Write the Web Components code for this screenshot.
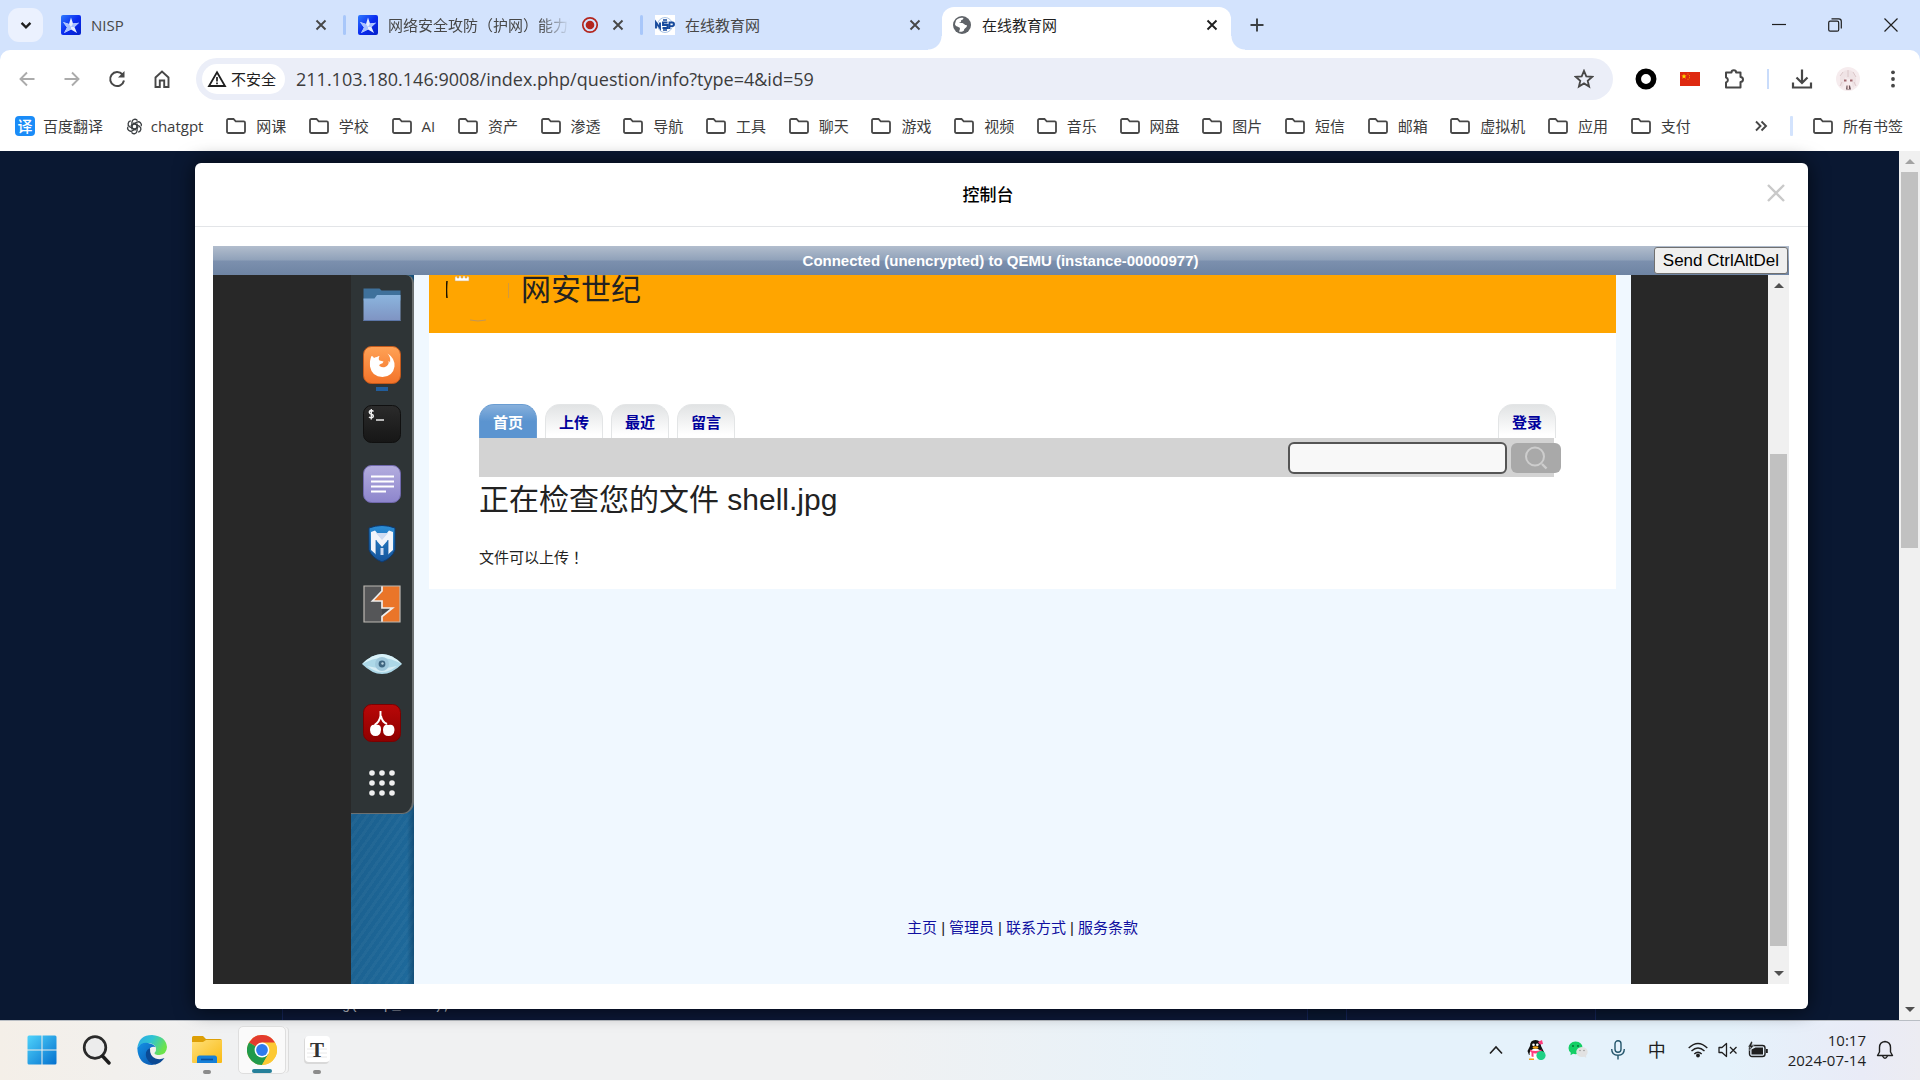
<!DOCTYPE html>
<html lang="zh-CN">
<head>
<meta charset="utf-8">
<title>在线教育网</title>
<style>
  html, body { margin: 0; height: 100%; overflow: hidden; }
  body {
    font: 15px/20px "Open Sans", "Noto Sans CJK SC", sans-serif;
    color: #1f1f1f;
  }
</style>
</head>
<body>
<desktop-screen></desktop-screen>

<script>
const ICONS = {
  chevronDown: ['0 0 12 12', '<path d="M2.2 4.2L6 8l3.800-3.800" fill="none" stroke="#1f1f1f" stroke-width="2"/>'],
  nisp: ['0 0 20 20', '<defs><linearGradient id="g" x1="0" x2="1" y2="1"><stop offset="0" stop-color="#2f7bff"/><stop offset=".5" stop-color="#0a2cf0"/><stop offset="1" stop-color="#0420c8"/></linearGradient></defs><rect width="20" height="20" rx="2" fill="url(#g)"/><path d="M10 2.500L12 8.500l6-.8-4.500 4.300 2.500 6-6-3.500L3 18l3-5.500L2 7l6 2z" fill="#e6eeff"/><path d="M2 7l6 2 2 3-4 .5zM12 8.500l6-.8-4.500 4.300-3.500 0zM3 18l7-3.500V12l-4 .5z" fill="#a9c2ff"/>'],
  nsp: ['0 0 20 20', '<rect width="20" height="20" fill="#fff"/><circle cx="10" cy="10" r="7.500" fill="none" stroke="#a9c4e6"/><path d="M1 13.500V7.500l4 5.500V7.500M12.500 7.500h-4.500v2.500h4.500v3h-5M14.500 14V7.500h3q1.500 0 1.500 1.800t-1.500 1.800h-3" fill="none" stroke="#174a9c" stroke-width="1.900"/><path d="M8 5h4M8 15h4" stroke="#174a9c" stroke-width="1.300"/>'],
  globe: ['0 0 20 20', '<circle cx="10" cy="10" r="9" fill="#5f6368"/><path d="M4 5.500c2-2.500 5-3.300 7.500-2.500-.3 1.500-1.500 2-2.500 2.500.5 1.500-1 2-2 2.500h5c.5 2 2 1.500 3 2.500 0 2.500-3 2.300-3 5-1.500 1.500-3.500 1.500-5 1 .7-2 1.500-2.500.5-4C5.500 11.500 3 11 3 9z" fill="#fff"/><path d="M10.500 8l2-2.500 2 .5 1.500 3-2.500 1z" fill="#5f6368"/>'],
  record: ['0 0 20 20', '<circle cx="10" cy="10" r="7.200" fill="none" stroke="#b3261e" stroke-width="1.700"/><circle cx="10" cy="10" r="4.300" fill="#b3261e"/>'],
  close: ['0 0 12 12', '<path d="M1.500 1.500l9 9M10.500 1.500l-9 9" stroke="currentColor" stroke-width="1.900"/>'],
  thinClose: ['0 0 14 14', '<path d="M.5.5l13 13M13.500.5l-13 13" stroke="currentColor" stroke-width="1.200"/>'],
  dialogClose: ['0 0 18 18', '<path d="M1 1l16 16M17 1L1 17" stroke="currentColor" stroke-width="2.400"/>'],
  plus: ['0 0 14 14', '<path d="M7 .5v13M.5 7h13" stroke="#3c4043" stroke-width="1.900"/>'],
  minimize: ['0 0 14 14', '<path d="M0 6.500h14" stroke="#1f1f1f" stroke-width="1.200"/>'],
  restore: ['0 0 14 14', '<rect x=".7" y="3.200" width="10" height="10" rx="1.500" fill="none" stroke="#1f1f1f" stroke-width="1.200"/><path d="M3.500.9h7.300q2.500 0 2.500 2.500v7" fill="none" stroke="#1f1f1f" stroke-width="1.200"/>'],
  back: ['0 0 20 20', '<path d="M17.500 10H3.500M10 3.500L3.500 10l6.500 6.500" fill="none" stroke="#ababab" stroke-width="1.900"/>'],
  forward: ['0 0 20 20', '<path d="M2.500 10h14M10 3.500l6.500 6.500-6.500 6.500" fill="none" stroke="#ababab" stroke-width="1.900"/>'],
  reload: ['0 0 20 20', '<path d="M15.500 5.500A7 7 0 1 0 17 11.500" fill="none" stroke="#474747" stroke-width="2"/><path d="M17.500 2v6.500H11z" fill="#474747"/>'],
  home: ['0 0 20 20', '<path d="M3.500 18V8.500L10 2.500l6.500 6v9.500h-4.300v-6.500H7.800V18z" fill="none" stroke="#474747" stroke-width="1.900"/>'],
  warn: ['0 0 20 20', '<path d="M10 3.200L18 17H2z" fill="none" stroke="#1f1f1f" stroke-width="1.800"/><path d="M10 8v4.500M10 13.500v1.800" stroke="#1f1f1f" stroke-width="1.700"/>'],
  star: ['0 0 20 20', '<path d="M10 1.800l2.300 5.500 5.900.5-4.500 3.900 1.400 5.800L10 14.400l-5.100 3.100 1.400-5.800L1.800 7.800l5.900-.5z" fill="none" stroke="#474747" stroke-width="1.800"/>'],
  ring: ['0 0 20 20', '<circle cx="10" cy="10" r="7" fill="none" stroke="#000" stroke-width="5"/>'],
  flag: ['0 0 20 14', '<rect width="20" height="14" fill="#de2910"/><path d="M4 1.800l.7 1.800h1.900l-1.500 1.200.6 1.900L4 5.600 2.300 6.700l.6-1.900-1.500-1.200h1.900z" fill="#ffde00"/><path d="M7.500 1.500h1v1h-1zM9 3.200h1v1H9zM9 5.200h1v1H9zM7.500 6.700h1v1h-1z" fill="#f5a700"/>'],
  puzzle: ['0 0 22 22', '<path d="M3 4.500h5.500a2.300 2.300 0 0 1 4.600 0H17.500V9a2.500 2.500 0 0 1 0 5v5.500H3v-5a2.600 2.600 0 0 0 0-5z" fill="none" stroke="#474747" stroke-width="2" stroke-linejoin="round"/>'],
  download: ['0 0 22 22', '<path d="M11 1.500v13M5.500 9.500L11 15l5.500-5.500M2 14.500v5h18v-5" fill="none" stroke="#474747" stroke-width="2.200"/>'],
  avatar: ['0 0 24 24', '<circle cx="12" cy="12" r="12" fill="#f6ecee"/><path d="M4 12c0-6 4-9 8-9s8 3 8 9c0 4-1 7-3 9-1-3-1-7-2-9-3 0-5-1-6-2 0 4-1 8-3 11-2-2-2-5-2-9z" fill="#efe3e5"/><path d="M7 5l-3 4M12 3v7M17 5l3 5M6 15l-2 4M18 15l2 4" stroke="#d5bfc2" stroke-width=".8"/><path d="M8 12.500h2.500v2H8zM14 12.500h2.500v2H14z" fill="#a36a70"/><path d="M10.500 18.500h3.500l1 4h-5z" fill="#6d565b"/><path d="M11.500 18h1.500v4h-1.500z" fill="#f3d9d8"/>'],
  dots: ['0 0 20 20', '<g fill="#474747"><circle cx="10" cy="3.300" r="1.900"/><circle cx="10" cy="10" r="1.900"/><circle cx="10" cy="16.700" r="1.900"/></g>'],
  gpt: ['0 0 20 20', '<g fill="none" stroke="#3c4043" stroke-width="1.600"><path id="a" d="M7 8.300V5a3.600 3.600 0 0 1 6.500-2M7 8.300v3.400l4.500 2.500"/><use href="#a" transform="rotate(60 10 10)"/><use href="#a" transform="rotate(120 10 10)"/><use href="#a" transform="rotate(180 10 10)"/><use href="#a" transform="rotate(240 10 10)"/><use href="#a" transform="rotate(300 10 10)"/></g>'],
  folderLine: ['0 0 20 16', '<path d="M1 2.500Q1 1 2.500 1H7.500l2.200 2.300h8Q19 3.300 19 4.800v8.700q0 1.500-1.500 1.500h-15Q1 15 1 13.500z" fill="none" stroke="#474747" stroke-width="1.800"/>'],
  more: ['0 0 14 12', '<path d="M2 1.500L6.500 6 2 10.500M7.500 1.500L12 6l-4.500 4.500" fill="none" stroke="#474747" stroke-width="1.900"/>'],
  dockFiles: ['0 0 38 38', '<path d="M.5 2.500h16l2 2h19v10H.5z" fill="#3f719b"/><path d="M.5 12.500h11l2.500-3.500h23.500v26H.5z" fill="url(#f)"/><defs><linearGradient id="f" y2="1" x2="0"><stop stop-color="#8bb5de"/><stop offset="1" stop-color="#7f93c2"/></linearGradient></defs><path d="M.5 34.500h37" stroke="#5c76a8"/>'],
  dockFox: ['0 0 38 38', '<defs><linearGradient id="f" y2="1" x2="0"><stop stop-color="#ffa256"/><stop offset="1" stop-color="#f37329"/></linearGradient></defs><rect x=".5" y=".5" width="37" height="37" rx="8" fill="url(#f)" stroke="#c3591c"/><path d="M8.500 10q1.500 0 2.500 2 1.500-1 3-1 1-1 2.500-1-1.500 3 0 4.500l4 1q-.5 2-3 2.500-2 1-1 2 3 2 5.500 1 4.500-2 3.500-6 1.500.5 1.500 2Q28 11 24.500 7.500q7.500 4.500 7 13-1.500 10-12 10.500Q9 31 7 20.500 6.500 14 8.500 10z" fill="#fff"/>'],
  dockTerm: ['0 0 38 38', '<defs><linearGradient id="f" y2="1" x2="0"><stop stop-color="#2b2b2b"/><stop offset="1" stop-color="#161616"/></linearGradient></defs><rect x=".5" y=".5" width="37" height="37" rx="8" fill="url(#f)" stroke="#101010"/><path d="M10.500 6.500Q9.500 5.500 8.200 5.500 6.200 5.700 6.300 7.500 6.500 9 8.300 9.200q2 .3 2.100 1.900-.2 1.700-2.200 1.800Q7 12.900 6 12M8.300 4v10.500" fill="none" stroke="#eee" stroke-width="1.400"/><path d="M13 15h8" stroke="#ddd" stroke-width="1.600"/>'],
  dockText: ['0 0 38 38', '<defs><linearGradient id="f" y2="1" x2="0"><stop stop-color="#b3addf"/><stop offset="1" stop-color="#8d85cc"/></linearGradient></defs><rect x=".5" y=".5" width="37" height="37" rx="8" fill="url(#f)" stroke="#7068ad"/><path d="M8 11.500h23M8 16.500h23M8 21.500h23M8 26.500h15" stroke="#fff" stroke-width="2.200"/>'],
  dockMeta: ['0 0 38 38', '<defs><linearGradient id="f" y2="1" x2="0"><stop stop-color="#2c8ed6"/><stop offset="1" stop-color="#155299"/></linearGradient></defs><path d="M6 3q13-5 26 0v22q-3 8-13 12Q9 33 6 25z" fill="url(#f)" stroke="#0d3a70"/><path d="M8 25V7l4-1.500L19 14l7-8.500 4 1.500v18l-5 4.500V15l-6 7-6-7v14.500z" fill="#f2f5fb"/><path d="M13 8l6 7 6-7M17.500 23h3v7h-3z" fill="#cfdcf2"/><path d="M13 15v14M25 15v14" stroke="#1b5fa8" stroke-width=".8"/>'],
  dockBurp: ['0 0 38 38', '<path d="M1 1h18v36H1z" fill="#555658"/><path d="M19 1h18v36H19z" fill="#ea7529"/><path d="M19 1v6L10 16h9V1z" fill="#ea7529"/><path d="M19 16v7h10.500L19 31.500z" fill="#46484b"/><path d="M19 1v5l-9.500 10H19v7h10.500L19 31.500V37" fill="none" stroke="#f1eeec" stroke-width="1.700"/><path d="M1 1h36v36H1z" fill="none" stroke="#bcb8b2" stroke-width="1.200"/>'],
  dockEye: ['0 0 42 24', '<path d="M1 12Q11 2 21 2t20 10Q31 22 21 22T1 12z" fill="#add8e8"/><path d="M1 12Q11 2 21 2t20 10Q30 6 21 6T1 12z" fill="#d9f2f9"/><path d="M6 14q8 6 15 6t15-6q-8 2-15 2T6 14z" fill="#d6edf5"/><circle cx="21" cy="12" r="7" fill="#9fc8dc"/><circle cx="21" cy="12" r="3.400" fill="#3f6680"/><circle cx="21.500" cy="11.500" r="1.200" fill="#b9d3e0"/>'],
  dockCherry: ['0 0 38 38', '<defs><linearGradient id="f" y2="1" x2="0"><stop stop-color="#b90808"/><stop offset="1" stop-color="#8e0000"/></linearGradient></defs><rect x=".5" y=".5" width="37" height="37" rx="8" fill="url(#f)" stroke="#7a0000"/><path d="M17.500 7v5q-1 6-6 9M18 12q1 6 6 8" fill="none" stroke="#fff" stroke-width="1.900"/><path d="M7 26q0-6 5.500-5 6-1 5.500 5-.5 6-5.500 6T7 26zM20 26q0-6 5.500-5 6-1 6 5-.5 6-6 6T20 26z" fill="#fff"/>'],
  dockGrid: ['0 0 38 38', '<g fill="#efefef"><circle cx="9" cy="9" r="2.800"/><circle cx="19" cy="9" r="2.800"/><circle cx="29" cy="9" r="2.800"/><circle cx="9" cy="19" r="2.800"/><circle cx="19" cy="19" r="2.800"/><circle cx="29" cy="19" r="2.800"/><circle cx="9" cy="29" r="2.800"/><circle cx="19" cy="29" r="2.800"/><circle cx="29" cy="29" r="2.800"/></g>'],
  siteMark: ['0 0 66 50', '<path d="M1 6q-1 9 0 17" stroke="#1a1200" stroke-width="1.500" fill="none"/><path d="M62.500 8v15" stroke="#d49a3c"/><path d="M24 45q8 2 16 0" stroke="#c0965a" fill="none"/><path d="M9 6V2l2-1v2h2V1h2v2h2V1h2v2h2V1l2 1v4z" fill="#fff" stroke="#d8a860" stroke-width=".6"/>'],
  lens: ['0 0 26 26', '<circle cx="12" cy="11.500" r="9" fill="none" stroke="#cdcdcd" stroke-width="2"/><path d="M19 19l4.500 4.500" stroke="#cdcdcd" stroke-width="2.400"/>'],
  windows: ['0 0 30 30', '<defs><linearGradient id="w" x2="1" y2="1"><stop stop-color="#4fd3fb"/><stop offset="1" stop-color="#0470ce"/></linearGradient></defs><path d="M.5 2q0-1.500 1.500-1.500h12.500v14H.5zM15.500.5H28q1.500 0 1.500 1.500v12.500h-14zM.5 15.500h14v14H2Q.5 29.500.5 28zM15.500 15.500h14V28q0 1.500-1.500 1.500H15.500z" fill="url(#w)"/>'],
  search: ['0 0 30 30', '<circle cx="13" cy="12.500" r="10.800" fill="#ececec" stroke="#2a2a2a" stroke-width="2.700"/><path d="M20.500 21l6.500 7" stroke="#1d1d1d" stroke-width="3.400" stroke-linecap="round"/>'],
  edge: ['0 0 30 30', '<defs><linearGradient id="e" x2="1" y2=".4"><stop stop-color="#2aa7e8"/><stop offset=".5" stop-color="#2fc4d2"/><stop offset="1" stop-color="#6be34c"/></linearGradient><linearGradient id="h" x2="1" y2="1"><stop stop-color="#1392e6"/><stop offset="1" stop-color="#0a50a8"/></linearGradient></defs><path d="M.3 13Q2 0 15 0q14 1 15 12-.5 7.500-7.500 8-5 0-5-2 2-2 1.500-5-1-4-7-5Q4 7.500.3 13z" fill="url(#e)"/><path d="M.3 13Q4 7 11 8q6 1 7.500 4-6-1-7.500 5 0 10 11 10Q19 30 15 30 1 29.500.3 13z" fill="url(#h)"/><path d="M13 13q-6 3-3.500 10 3 6 9 6.500Q24 28 27.500 23q-4 2-9 .5-6-2.500-5.500-10.500z" fill="#0b4a94"/>'],
  explorer: ['0 0 30 28', '<path d="M0 1.500Q0 0 1.500 0H11l3 3h14q2 0 2 2v5H0z" fill="#dd9f06"/><path d="M0 6h11l3-2h16v22q0 1-1 1H1q-1 0-1-1z" fill="url(#y)"/><defs><linearGradient id="y" x2="1" y2="1"><stop stop-color="#ffe07a"/><stop offset="1" stop-color="#f9ba13"/></linearGradient></defs><path d="M5 27v-5q0-2.500 2.500-2.500h15Q25 19.500 25 22v5z" fill="#1680d8"/><path d="M9 23.500h12" stroke="#0a4f9c" stroke-width="1.600"/>'],
  chrome: ['0 0 30 30', '<circle cx="15" cy="15" r="15" fill="#fcc934"/><path d="M15 15L2 7.500A15 15 0 0 1 28 7.500z" fill="#e33b2e"/><path d="M2 7.500A15 15 0 0 0 15 30L21.500 18.700 15 15z" fill="#219a4c"/><path d="M15 7.500h13A15 15 0 0 1 15 30l6.500-11.300z" fill="#fcc934"/><circle cx="15" cy="15" r="7.400" fill="#fff"/><circle cx="15" cy="15" r="5.900" fill="#2f7bee"/>'],
  typora: ['0 0 28 30', '<rect x="1" y="2" width="25" height="27" rx="4" fill="#d9d9d9"/><rect x="2" y="1" width="25" height="26" rx="4" fill="#fff"/><path d="M4 14h20M4 18h20M4 22h20" stroke="#e2e2e2" stroke-width=".8"/>'],
  chevronUp: ['0 0 16 16', '<path d="M2 11.500l6-6.500 6 6.500" fill="none" stroke="#1f1f1f" stroke-width="1.600"/>'],
  qq: ['0 0 20 20', '<path d="M1.500 11Q3 8 4 6q0-6 5.500-6T15 6l3 6-1 3H3z" fill="#111"/><ellipse cx="9.500" cy="14" rx="6" ry="5.500" fill="#fff"/><circle cx="7.500" cy="4.800" r="1.300" fill="#fff"/><circle cx="11.300" cy="4.800" r="1.300" fill="#fff"/><ellipse cx="9.500" cy="7.500" rx="3" ry="1.200" fill="#f5a214"/><path d="M4 9.500q5 3 11.500 0v2.500q-5 2.500-8 1v4l-2-.5v-4q-2-1-1.500-3zM12 2l4-2 1 4-3 .5z" fill="#ff3c7d"/><path d="M3 18.500h5V20H3z" fill="#f5a214"/><circle cx="15" cy="15.500" r="4.600" fill="#1fd085"/>'],
  wechat: ['0 0 20 18', '<path d="M7.500.5q7 .5 7 6.500-.5 6-7 6.300l-2.500-.5-2.500 1.500.3-2.500Q.5 10 .5 7q.500-6 7-6.500z" fill="#14cf66"/><circle cx="5" cy="5" r=".9" fill="#076b34"/><circle cx="10" cy="5" r=".9" fill="#076b34"/><path d="M14 6q5.500.5 5.700 5-.2 2.500-1.700 3.800l.2 2-2-1q-7.500 1-8-4.800Q8.500 6.500 14 6z" fill="#e2e2e2"/><circle cx="12" cy="9.500" r=".8" fill="#999"/><circle cx="16" cy="9.500" r=".8" fill="#999"/>'],
  mic: ['0 0 16 20', '<rect x="5" y=".8" width="6" height="11.500" rx="3" fill="none" stroke="#24566b" stroke-width="1.400"/><path d="M1.700 9q0 6.300 6.300 6.300T14.300 9M8 15.300v4.200" fill="none" stroke="#24566b" stroke-width="1.400"/>'],
  wifi: ['0 0 20 16', '<g fill="none" stroke="#1f1f1f" stroke-width="1.400"><path d="M.7 6Q10-3 19.300 6M3.500 9q6.500-6 13 0M6.300 12q3.700-3.500 7.400 0"/></g><circle cx="10" cy="13.500" r="1.900" fill="#1f1f1f"/>'],
  mute: ['0 0 20 16', '<path d="M1 5.500h3L8.500 1.500v13L4 10.500H1z" fill="none" stroke="#1f1f1f" stroke-width="1.300" stroke-linejoin="round"/><path d="M12 5l6.500 6.500M18.500 5L12 11.500" stroke="#1f1f1f" stroke-width="1.300"/>'],
  battery: ['0 0 20 18', '<rect x="1.500" y="4.500" width="15.500" height="11" rx="2.500" fill="none" stroke="#1f1f1f" stroke-width="1.400"/><path d="M3.500 8.500l4-2h7.500v7H3.500z" fill="#1f1f1f"/><path d="M18 8h1.800v4H18z" fill="#1f1f1f"/><path d="M3.500 0L0 6h2.500L1.500 9.500 6 4.500H3.500l1-3z" fill="#1f1f1f" stroke="#e5f2fb" stroke-width=".4"/>'],
  bell: ['0 0 18 20', '<path d="M9 1.500q5.500.5 5.500 6v4.500l2 3.500h-15l2-3.500V7.500q0-5.500 5.500-6zM6.500 16q2.500 4.500 5 0" fill="none" stroke="#1f1f1f" stroke-width="1.400" stroke-linejoin="round"/>'],
};

const RESET = `
  *, *::before, *::after { box-sizing: border-box; }
  button, input { font: inherit; color: inherit; margin: 0; padding: 0; border: 0; background: none; outline: 0; }
  button { display: flex; align-items: center; justify-content: center; flex: none; }
  a { color: inherit; text-decoration: none; }
`;

function define(name, css, html) {
  const template = document.createElement('template');
  template.innerHTML = `<style>${RESET}${css}</style>${html}`;
  customElements.define(name, class extends HTMLElement {
    constructor() {
      super();
      this.attachShadow({ mode: 'open' }).append(template.content.cloneNode(true));
    }
  });
}

/* ---------- icon ---------- */
customElements.define('ui-icon', class extends HTMLElement {
  constructor() {
    super();
    this.attachShadow({ mode: 'open' });
  }
  connectedCallback() {
    const [box, body] = ICONS[this.getAttribute('name')];
    const [w, h = w] = this.getAttribute('size').split(' ');
    this.shadowRoot.innerHTML = `
      <style>:host { display: block; flex: none; width: ${w}px; height: ${h}px; } svg { display: block; width: 100%; height: 100%; }</style>
      <svg viewBox="${box}" aria-hidden="true">${body}</svg>`;
  }
});

/* ---------- scroll bar ---------- */
define('scroll-rail', `
  :host { display: flex; flex-direction: column; flex: none; width: 21px; padding: 0 2px; background: #f0f0f0; }
  i { flex: none; height: 21px; display: flex; align-items: center; justify-content: center; }
  i::before { content: ""; border: 5px solid transparent; }
  .up::before { border-top: 0; border-bottom-color: var(--up, #505050); }
  .down::before { border-bottom: 0; border-top-color: #505050; }
  .before { flex: var(--before, 0); }
  .thumb { flex: var(--thumb, 1); background: #c1c1c1; }
  .after { flex: var(--after, 1); }
`, `<i class="up"></i><div class="before"></div><div class="thumb"></div><div class="after"></div><i class="down"></i>`);

/* ---------- browser tab ---------- */
define('browser-tab', `
  :host { display: flex; align-items: center; flex: 0 1 289px; min-width: 0; height: 36px; padding: 0 11px 0 10px; gap: 10px; color: #474747; position: relative; }
  :host([active]) { background: #fff; color: #1f1f1f; height: 43px; padding-bottom: 7px; border-radius: 12px 12px 0 0; align-self: flex-end; }
  :host([active])::before, :host([active])::after { content: ""; position: absolute; bottom: 0; width: 14px; height: 14px; }
  :host([active])::before { right: 100%; background: radial-gradient(circle at 0 0, transparent 13px, #fff 14px); }
  :host([active])::after { left: 100%; background: radial-gradient(circle at 100% 0, transparent 13px, #fff 14px); }
  :host([divided])::after { content: ""; position: absolute; right: -6px; width: 3px; height: 20px; border-radius: 2px; background: #a8c7fa; }
  .title { flex: 1; min-width: 0; overflow: hidden; white-space: nowrap; }
  :host([fade]) .title { -webkit-mask-image: linear-gradient(90deg, #000 calc(100% - 30px), transparent); mask-image: linear-gradient(90deg, #000 calc(100% - 30px), transparent); }
  button { width: 16px; height: 20px; }
`, `<slot name="icon"></slot><span class="title"><slot></slot></span><slot name="state"></slot>
<button aria-label="关闭标签页"><ui-icon name="close" size="12"></ui-icon></button>`);

define('tab-strip', `
  :host { display: flex; align-items: center; height: 50px; background: #d3e3fd; padding: 0 22px 0 8px; }
  .list { width: 35px; height: 34px; border-radius: 11px; background: #ebf1fe; }
  .tabs { display: flex; flex: 1; min-width: 0; align-items: center; align-self: stretch; gap: 8px; margin-left: 8px; }
  .new { margin-left: 10px; width: 16px; }
  .window { display: flex; gap: 42px; }
`, `<button class="list" aria-label="搜索标签页"><ui-icon name="chevronDown" size="14"></ui-icon></button>
<div class="tabs">
  <browser-tab divided><ui-icon slot="icon" name="nisp" size="20"></ui-icon>NISP</browser-tab>
  <browser-tab divided fade><ui-icon slot="icon" name="nisp" size="20"></ui-icon>网络安全攻防（护网）能力测试<ui-icon slot="state" name="record" size="20"></ui-icon></browser-tab>
  <browser-tab><ui-icon slot="icon" name="nsp" size="20"></ui-icon>在线教育网</browser-tab>
  <browser-tab active><ui-icon slot="icon" name="globe" size="20"></ui-icon>在线教育网</browser-tab>
  <button class="new" aria-label="新标签页"><ui-icon name="plus" size="14"></ui-icon></button>
</div>
<div class="window">
  <button aria-label="最小化"><ui-icon name="minimize" size="14"></ui-icon></button>
  <button aria-label="还原"><ui-icon name="restore" size="14"></ui-icon></button>
  <button aria-label="关闭"><ui-icon name="thinClose" size="14"></ui-icon></button>
</div>`);

/* ---------- toolbar ---------- */
define('address-bar', `
  :host { display: flex; align-items: center; height: 42px; border-radius: 21px; background: #ebeef8; padding: 0 19px 0 6px; min-width: 0; }
  .chip { height: 30px; border-radius: 15px; background: #fff; padding: 0 9px 0 5px; gap: 4px; }
  input { flex: 1; min-width: 0; height: 30px; margin-left: 11px; font-size: 18px; color: #3c3c3c; }
`, `<button class="chip"><ui-icon name="warn" size="20"></ui-icon>不安全</button>
<input type="text" aria-label="地址" value="211.103.180.146:9008/index.php/question/info?type=4&amp;id=59">
<button aria-label="收藏"><ui-icon name="star" size="20"></ui-icon></button>`);

define('tool-bar', `
  :host { display: flex; align-items: center; height: 58px; background: #fff; padding: 0 17px; position: relative; }
  .nav { display: flex; gap: 25px; margin-right: 24px; }
  address-bar { flex: 1; }
  .side { display: flex; align-items: center; gap: 23px; margin-left: 22px; }
  hr { width: 2px; height: 20px; border: 0; margin: 0 -1px; background: #c9dcfb; }
`, `<div class="nav">
  <button aria-label="后退"><ui-icon name="back" size="20"></ui-icon></button>
  <button aria-label="前进"><ui-icon name="forward" size="20"></ui-icon></button>
  <button aria-label="重新加载"><ui-icon name="reload" size="20"></ui-icon></button>
  <button aria-label="主页"><ui-icon name="home" size="20"></ui-icon></button>
</div>
<address-bar></address-bar>
<div class="side">
  <button aria-label="扩展一"><ui-icon name="ring" size="22"></ui-icon></button>
  <button aria-label="扩展二"><ui-icon name="flag" size="20 14"></ui-icon></button>
  <button aria-label="扩展程序"><ui-icon name="puzzle" size="22"></ui-icon></button>
  <hr>
  <button aria-label="下载"><ui-icon name="download" size="22"></ui-icon></button>
  <button aria-label="个人资料"><ui-icon name="avatar" size="24"></ui-icon></button>
  <button aria-label="菜单"><ui-icon name="dots" size="20"></ui-icon></button>
</div>`);

/* ---------- bookmarks ---------- */
define('book-mark', `
  :host { display: block; flex: none; }
  a { display: flex; align-items: center; gap: 10px; white-space: nowrap; color: #3c3c3c; }
  :host([compact]) a { gap: 8px; }
`, `<a href="#"><slot name="icon"><ui-icon name="folderLine" size="20 16"></ui-icon></slot><span><slot></slot></span></a>`);

define('bookmark-bar', `
  :host { display: flex; align-items: center; height: 43px; background: #fff; padding: 0 17px 7px 15px; }
  .items { display: flex; flex: 1; justify-content: space-between; margin-right: 63px; }
  .badge { width: 20px; height: 20px; border-radius: 4px; background: #1a8cf8; color: #fff; font-weight: 500; font-size: 15px; text-align: center; }
  hr { width: 3px; height: 20px; border: 0; margin: 0 20px 0 22px; background: #d3e3fd; border-radius: 1px; }
`, `<nav class="items" aria-label="书签">
  <book-mark compact><span slot="icon" class="badge">译</span>百度翻译</book-mark>
  <book-mark compact><ui-icon slot="icon" name="gpt" size="17"></ui-icon>chatgpt</book-mark>
  <book-mark>网课</book-mark><book-mark>学校</book-mark><book-mark>AI</book-mark><book-mark>资产</book-mark>
  <book-mark>渗透</book-mark><book-mark>导航</book-mark><book-mark>工具</book-mark><book-mark>聊天</book-mark>
  <book-mark>游戏</book-mark><book-mark>视频</book-mark><book-mark>音乐</book-mark><book-mark>网盘</book-mark>
  <book-mark>图片</book-mark><book-mark>短信</book-mark><book-mark>邮箱</book-mark><book-mark>虚拟机</book-mark>
  <book-mark>应用</book-mark><book-mark>支付</book-mark>
</nav>
<button aria-label="更多书签"><ui-icon name="more" size="14 12"></ui-icon></button>
<hr>
<book-mark>所有书签</book-mark>`);

/* ---------- remote machine dock ---------- */
define('remote-dock', `
  :host { display: flex; flex-direction: column; flex: none; width: 63px; background: linear-gradient(90deg, transparent 56px, #0d3c6099), repeating-linear-gradient(125deg, #ffffff08 0 3px, transparent 3px 7px), linear-gradient(100deg, #18547f, #1e6a9c); }
  nav { display: flex; flex-direction: column; height: 539px; background: #2e3436; border: solid #6b7071; border-width: 0 2px 1px 0; border-radius: 0 8px 12px 0; }
  button { flex: 1; position: relative; }
  button.on::after { content: ""; position: absolute; bottom: 4px; width: 12px; height: 4px; background: #215d9c; }
`, `<nav aria-label="Dock">
  <button aria-label="Files"><ui-icon name="dockFiles" size="38"></ui-icon></button>
  <button aria-label="Firefox" class="on"><ui-icon name="dockFox" size="38"></ui-icon></button>
  <button aria-label="Terminal"><ui-icon name="dockTerm" size="38"></ui-icon></button>
  <button aria-label="Text editor"><ui-icon name="dockText" size="38"></ui-icon></button>
  <button aria-label="Metasploit"><ui-icon name="dockMeta" size="38"></ui-icon></button>
  <button aria-label="Burp Suite"><ui-icon name="dockBurp" size="38"></ui-icon></button>
  <button aria-label="Viewer"><ui-icon name="dockEye" size="42 24"></ui-icon></button>
  <button aria-label="CherryTree"><ui-icon name="dockCherry" size="38"></ui-icon></button>
  <button aria-label="Applications"><ui-icon name="dockGrid" size="38"></ui-icon></button>
</nav>`);

/* ---------- remote web site ---------- */
define('site-tab', `
  :host { display: block; width: 58px; }
  a { display: flex; align-items: center; justify-content: center; height: 34px; padding-top: 2px; border: 1px solid #e3e5e6; border-bottom: 0; border-radius: 15px 15px 0 0; background: linear-gradient(#e1e3e4, #fff 90%); color: #00009c; font-weight: 700; }
  :host([active]) a { background: linear-gradient(#87b0dc, #5b94d0 50%); border-color: #6a9dd2; color: #fff; }
`, `<a href="#"><slot></slot></a>`);

define('remote-site', `
  :host { display: flex; flex-direction: column; flex: 1; min-width: 0; padding: 0 15px; background: #f0f8ff; font-family: "Liberation Sans", "Noto Sans CJK SC", sans-serif; color: #222; }
  header { display: flex; align-items: flex-start; height: 58px; background: #ffa500; padding-left: 17px; gap: 9px; font-size: 30px; line-height: 30px; color: #222; }
  main { background: #fff; height: 256px; padding: 71px 60px 0 50px; }
  .tabs { display: flex; gap: 8px; }
  .tabs .login { margin-left: auto; }
  form { display: flex; align-items: center; justify-content: flex-end; gap: 4px; height: 39px; margin-right: 2px; background: #d3d3d3; }
  input { width: 219px; height: 32px; border: 2px solid #555; border-radius: 6px; background: #f8f8f8; padding: 0 8px; }
  form button { width: 50px; height: 30px; border-radius: 6px; background: #a9a9a9; margin-right: -7px; }
  h1 { margin: 3px 0 0; font-size: 30px; line-height: 40px; font-weight: 400; }
  p { margin: 27px 0 0; }
  .mark { font-family: "Noto Sans CJK TC", sans-serif; }
  footer { margin: auto 0 46px; display: flex; justify-content: center; gap: 4px; }
  footer a { color: #1010a0; }
`, `<header><ui-icon name="siteMark" size="66 50"></ui-icon>网安世纪</header>
<main>
  <nav class="tabs">
    <site-tab active>首页</site-tab><site-tab>上传</site-tab><site-tab>最近</site-tab><site-tab>留言</site-tab>
    <site-tab class="login">登录</site-tab>
  </nav>
  <form><input type="text" aria-label="搜索"><button type="button" aria-label="搜索"><ui-icon name="lens" size="26"></ui-icon></button></form>
  <h1>正在检查您的文件 shell.jpg</h1>
  <p>文件可以上传<span class="mark" lang="zh-TW">！</span></p>
</main>
<footer><a href="#">主页</a>|<a href="#">管理员</a>|<a href="#">联系方式</a>|<a href="#">服务条款</a></footer>`);

/* ---------- console ---------- */
define('vnc-console', `
  :host { display: flex; flex-direction: column; flex: 1; min-height: 0; }
  .bar { display: flex; align-items: center; height: 29px; padding-right: 1px; background: linear-gradient(#b2bdcd 0, #8fa1b9 49%, #7c90ae 51%, #6e84a3); font-family: "Liberation Sans", sans-serif; }
  .bar::before, .bar .end { content: ""; flex: 1; display: flex; justify-content: flex-end; }
  b { font-size: 15px; color: #fff; white-space: nowrap; }
  .bar button { height: 27px; padding: 0 8px; border: 1px solid #707070; border-radius: 3px; background: #efefef; color: #000; font-size: 17px; }
  .view { display: flex; flex: 1; min-height: 0; overflow: hidden; }
  .screen { display: flex; flex: 1; min-width: 0; background: #282828; padding: 0 137px 0 138px; }
  scroll-rail { --before: 158; --thumb: 492; --after: 17; }
`, `<div class="bar"><b>Connected (unencrypted) to QEMU (instance-00000977)</b><span class="end"><button>Send CtrlAltDel</button></span></div>
<div class="view">
  <div class="screen"><remote-dock></remote-dock><remote-site></remote-site></div>
  <scroll-rail></scroll-rail>
</div>`);

define('modal-dialog', `
  :host { display: flex; flex-direction: column; flex: 1; background: #fff; border-radius: 6px; box-shadow: 0 0 20px #000a; }
  header { display: flex; align-items: center; height: 64px; padding: 0 23px 0 0; border-bottom: 1px solid #e3e5e8; color: #000; font-size: 17px; font-weight: 500; }
  header span { flex: 1; text-align: center; padding-left: 14px; }
  button { color: #c9c9c9; padding-bottom: 3px; }
  section { display: flex; flex: 1; min-height: 0; padding: 19px 19px 25px 18px; }
`, `<header><span><slot name="title"></slot></span><button aria-label="关闭"><ui-icon name="dialogClose" size="18"></ui-icon></button></header>
<section><slot></slot></section>`);

define('page-view', `
  :host { display: flex; flex: 1; min-height: 0; position: relative; background: #0a1832; }
  .lower { flex: 1; display: flex; align-items: flex-end; padding: 0 303px 0 282px; gap: 38px; }
  .lower div { height: 40px; border: solid #142457; border-width: 0 1px; background: #0c1736; overflow: hidden; }
  .code { flex: 1; padding: 15px 0 0 42px; color: #c8ccd6; font: 14px/20px "Liberation Mono", monospace; white-space: pre; }
  .aside { width: 250px; }
  .layer { position: absolute; inset: 0 21px 0 0; display: flex; padding: 12px 91px 11px 195px; }
  scroll-rail { --up: #a3a3a3; --thumb: 376; --after: 451; }
`, `<div class="lower"><div class="code">msg(http_code);</div><div class="aside"></div></div>
<scroll-rail></scroll-rail>
<div class="layer"><modal-dialog role="dialog"><span slot="title">控制台</span><vnc-console></vnc-console></modal-dialog></div>`);

/* ---------- task bar ---------- */
define('task-item', `
  :host { display: block; flex: none; }
  button { width: 48px; height: 48px; border-radius: 5px; position: relative; }
  :host([active]) button { background: #fafafa; border: 1px solid #dedede; box-shadow: 3px 0 0 -1px #f4f4f4, 4px 0 0 -1px #dcdcdc; }
  :host([running]) button::after { content: ""; position: absolute; bottom: 0; width: 8px; height: 4px; border-radius: 2px; background: #8b8b8b; }
  :host([active]) button::after { width: 20px; background: #26809a; }
`, `<button><slot></slot></button>`);

define('task-bar', `
  :host { display: flex; align-items: center; flex: none; height: 60px; padding: 0 26px 1px 18px; border-top: 1px solid #b9bec4; box-sizing: border-box; background: linear-gradient(90deg, #f4efe8, #f0f1f2 12%, #f0f1f2 45%, #e5f2fb 66%, #e5f2fb 90%, #e9ebf7 97%, #ececf2); }
  .apps { display: flex; gap: 7px; }
  .doc { display: grid; place-items: center; font: 700 21px/24px "Liberation Serif", serif; color: #333; }
  .doc > * { grid-area: 1 / 1; }
  .tray { display: flex; align-items: center; margin-left: auto; }
  .tray > * { margin-left: 22px; }
  .ime { font-size: 18px; }
  .status { gap: 10px; }
  .clock { text-align: right; line-height: 20px; margin-left: 20px; }
  .clock span { display: block; }
  .bell { margin-left: 10px; }
`, `<div class="apps">
  <task-item><ui-icon name="windows" size="30"></ui-icon></task-item>
  <task-item><ui-icon name="search" size="30"></ui-icon></task-item>
  <task-item><ui-icon name="edge" size="30"></ui-icon></task-item>
  <task-item running><ui-icon name="explorer" size="30 28"></ui-icon></task-item>
  <task-item running active><ui-icon name="chrome" size="30"></ui-icon></task-item>
  <task-item running><span class="doc"><ui-icon name="typora" size="28 30"></ui-icon><span>T</span></span></task-item>
</div>
<div class="tray">
  <button aria-label="显示隐藏的图标"><ui-icon name="chevronUp" size="16"></ui-icon></button>
  <button aria-label="QQ"><ui-icon name="qq" size="20"></ui-icon></button>
  <button aria-label="微信"><ui-icon name="wechat" size="20 18"></ui-icon></button>
  <button aria-label="麦克风"><ui-icon name="mic" size="16 20"></ui-icon></button>
  <button class="ime" aria-label="输入法">中</button>
  <button class="status" aria-label="网络、音量和电池"><ui-icon name="wifi" size="20 16"></ui-icon><ui-icon name="mute" size="20 16"></ui-icon><ui-icon name="battery" size="20 18"></ui-icon></button>
  <button class="clock"><span><span>10:17</span><span>2024-07-14</span></span></button>
  <button class="bell" aria-label="通知"><ui-icon name="bell" size="18 20"></ui-icon></button>
</div>`);

define('desktop-screen', `
  :host { display: flex; flex-direction: column; height: 100vh; background: #d3e3fd; }
  tool-bar { border-radius: 10px 10px 0 0; }
`, `<tab-strip></tab-strip><tool-bar></tool-bar><bookmark-bar></bookmark-bar><page-view></page-view><task-bar></task-bar>`);
</script>
</body>
</html>
